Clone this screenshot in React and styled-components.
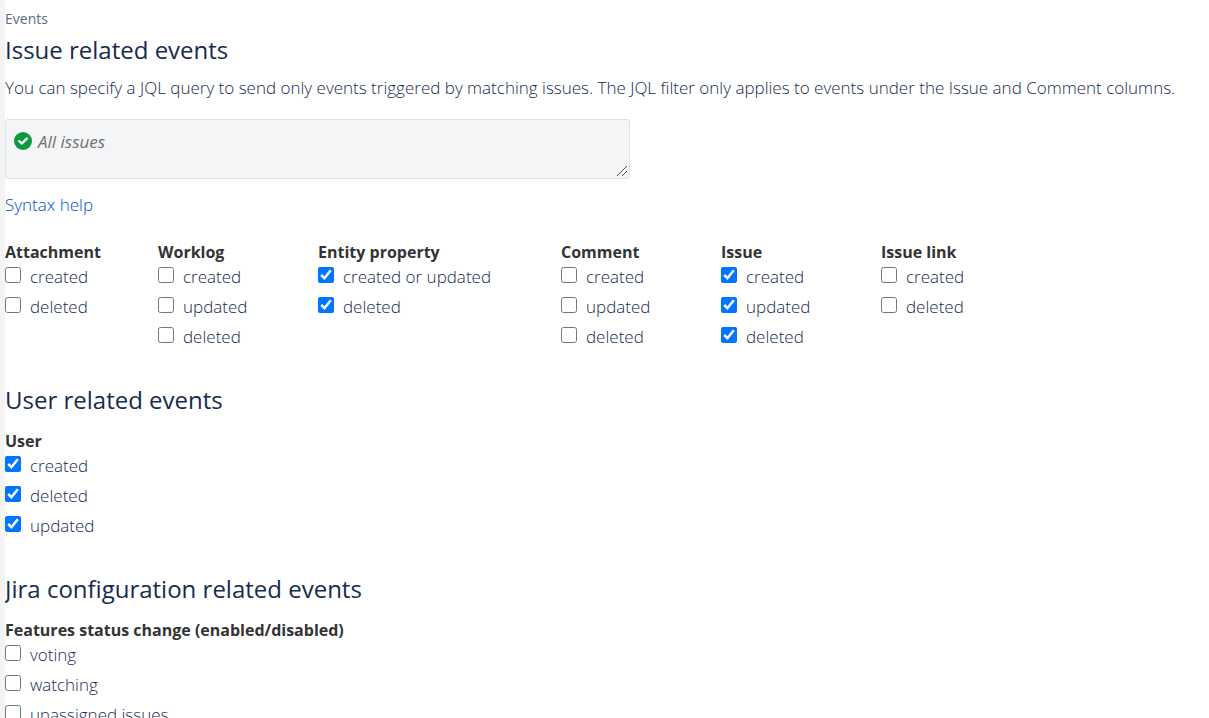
import React from "react";
import styled, { createGlobalStyle } from "styled-components";

const GlobalStyle = createGlobalStyle`
  *, *::before, *::after { box-sizing: border-box; }
  body {
    margin: 0;
    background: #ffffff;
    color: #172b4d;
    font-family: "Segoe UI", "Open Sans", "Noto Sans", sans-serif;
    font-size: 17px;
    font-weight: 300;
    line-height: 24px;
  }
`;

const Page = styled.main`
  height: 100vh;
  overflow: hidden;
  border-left: 5px solid #f4f4f4;
`;

const Eyebrow = styled.div`
  padding-top: 9px;
  color: #5e6c84;
  font-size: 14px;
  line-height: 20px;
  font-weight: 500;
`;

const Section = styled.section`
  margin-bottom: 25px;
`;

const Title = styled.h2`
  margin: 0;
  padding: 5px 0 6px;
  color: #172b4d;
  font-size: 24px;
  line-height: 32px;
  font-weight: 500;

  & + fieldset {
    margin-top: 7px;
  }
`;

const Description = styled.p`
  margin: 4px 0 0;
`;

const QueryBox = styled.div`
  position: relative;
  display: flex;
  max-width: 625px;
  margin-top: 19px;
`;

const QueryInput = styled.textarea`
  width: 100%;
  height: 60px;
  padding: 10px 8px 8px 32px;
  border: 1px solid #dfe1e6;
  border-radius: 3px;
  outline: none;
  background: #f4f5f7;
  color: #172b4d;
  font: inherit;
  font-weight: 400;
  overflow: auto;

  &::placeholder {
    color: #707070;
    font-style: italic;
    opacity: 1;
  }

  &::-webkit-resizer {
    background: transparent;
  }
`;

const ValidIcon = styled.svg`
  position: absolute;
  top: 13px;
  left: 9px;
  width: 18px;
  height: 18px;
`;

const ResizeGrip = styled.svg`
  position: absolute;
  right: 2px;
  bottom: 2px;
  width: 12px;
  height: 12px;
  pointer-events: none;
`;

const HelpLink = styled.a`
  display: inline-block;
  margin: 14px 0 23px;
  color: #0052cc;
  text-decoration: none;
`;

const Groups = styled.div`
  display: grid;
  grid-template-columns: 153px 160px 243px 160px 160px auto;
`;

const Group = styled.fieldset`
  min-width: 0;
  margin: 0;
  padding: 0;
  border: 0;
`;

const GroupTitle = styled.legend`
  padding: 0;
  color: #333333;
  font-size: 16px;
  font-weight: 700;
  white-space: nowrap;
`;

const Option = styled.label`
  display: flex;
  align-items: flex-start;
  gap: 9px;
  height: 30px;
  line-height: 26px;
  white-space: nowrap;
`;

const Tick = styled.input`
  flex: none;
  width: 16px;
  height: 16px;
  margin: 3px 0 0;
  accent-color: #0075ff;
`;

const issueGroups = [
  ["Attachment", [["created"], ["deleted"]]],
  ["Worklog", [["created"], ["updated"], ["deleted"]]],
  ["Entity property", [["created or updated", true], ["deleted", true]]],
  ["Comment", [["created"], ["updated"], ["deleted"]]],
  ["Issue", [["created", true], ["updated", true], ["deleted", true]]],
  ["Issue link", [["created"], ["deleted"]]],
];

function EventGroup({ title, options }) {
  return (
    <Group>
      <GroupTitle>{title}</GroupTitle>
      {options.map(([name, checked]) => (
        <Option key={name}>
          <Tick type="checkbox" defaultChecked={Boolean(checked)} />
          <span>{name}</span>
        </Option>
      ))}
    </Group>
  );
}

export default function App() {
  return (
    <>
      <GlobalStyle />
      <Page>
        <Eyebrow>Events</Eyebrow>
        <Section>
          <Title>Issue related events</Title>
          <Description>
            You can specify a JQL query to send only events triggered by matching issues. The JQL
            filter only applies to events under the Issue and Comment columns.
          </Description>
          <QueryBox>
            <QueryInput aria-label="JQL query" placeholder="All issues" />
            <ValidIcon viewBox="0 0 18 18" aria-hidden="true">
              <circle cx="9" cy="9" r="9" fill="#0b9a3e" />
              <path
                d="M5.2 9.2 7.8 11.4 12.8 6.6"
                fill="none"
                stroke="#fff"
                strokeWidth="2.4"
                strokeLinecap="round"
                strokeLinejoin="round"
              />
            </ValidIcon>
            <ResizeGrip viewBox="0 0 12 12" aria-hidden="true">
              <path d="M1 11 11 1M6 11 11 6" fill="none" stroke="#555" strokeWidth="1" />
            </ResizeGrip>
          </QueryBox>
          <HelpLink href="#syntax-help">Syntax help</HelpLink>
          <Groups>
            {issueGroups.map(([title, options]) => (
              <EventGroup key={title} title={title} options={options} />
            ))}
          </Groups>
        </Section>
        <Section>
          <Title>User related events</Title>
          <EventGroup
            title="User"
            options={[["created", true], ["deleted", true], ["updated", true]]}
          />
        </Section>
        <Section>
          <Title>Jira configuration related events</Title>
          <EventGroup
            title="Features status change (enabled/disabled)"
            options={[["voting"], ["watching"], ["unassigned issues"]]}
          />
        </Section>
      </Page>
    </>
  );
}
